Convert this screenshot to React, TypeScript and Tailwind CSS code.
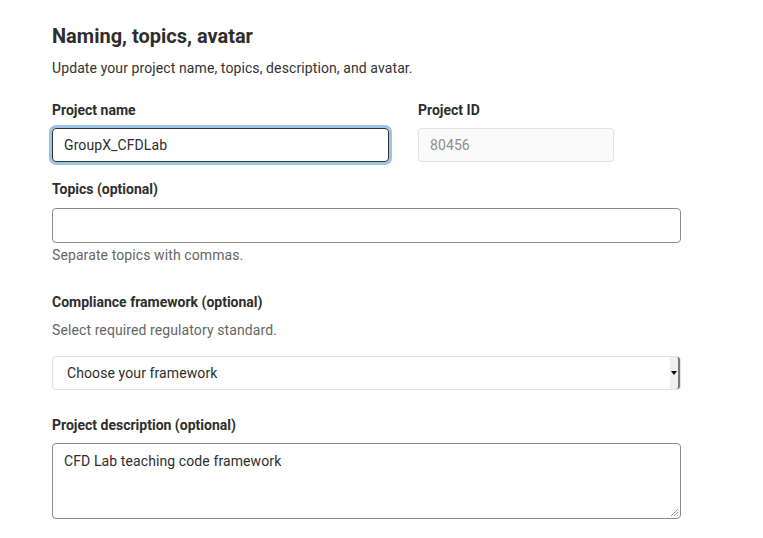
import React from 'react';

const font = { fontFamily: 'Roboto, "Liberation Sans", sans-serif' };

const Label: React.FC<{ children: React.ReactNode }> = ({ children }) => (
  <label className="block text-[14px] font-bold text-[#2e2e2e] leading-[20px]">{children}</label>
);

const App: React.FC = () => {
  return (
    <div className="w-[763px] h-[538px] bg-white overflow-hidden" style={font}>
      <div className="pl-[52px] pr-[82px] pt-[24px]">
        {/* Section header */}
        <h2 className="text-[20px] font-bold text-[#2e2e2e] leading-[24px]">Naming, topics, avatar</h2>
        <p className="mt-[10px] text-[14px] text-[#333] leading-[20px] tracking-[0.1px]">
          Update your project name, topics, description, and avatar.
        </p>

        {/* Name + ID */}
        <div className="mt-[22px] flex gap-[29px]">
          <div className="w-[337px]">
            <Label>Project name</Label>
            <div className="mt-[8px] h-[34px] rounded-[4px] border border-[#333] ring-[3px] ring-[#9fc3e7] flex items-center pl-[11px] text-[14px] text-[#2e2e2e] tracking-[0.1px]">
              GroupX_CFDLab
            </div>
          </div>
          <div className="w-[196px]">
            <Label>Project ID</Label>
            <div className="mt-[8px] h-[34px] rounded-[4px] border border-[#e3e3e3] bg-[#fafafa] flex items-center pl-[11px] text-[14px] text-[#8f8f8f] tracking-[0.1px]">
              80456
            </div>
          </div>
        </div>

        {/* Topics */}
        <div className="mt-[17px]">
          <Label>Topics (optional)</Label>
          <div className="mt-[9px] h-[35px] rounded-[4px] border border-[#8c8c8c]" />
          <p className="mt-[2px] text-[14px] text-[#666] leading-[20px] tracking-[0.1px]">Separate topics with commas.</p>
        </div>

        {/* Compliance */}
        <div className="mt-[27px]">
          <Label>Compliance framework (optional)</Label>
          <p className="mt-[8px] text-[14px] text-[#666] leading-[20px] tracking-[0.1px]">Select required regulatory standard.</p>
          <div className="mt-[16px] h-[34px] rounded-[4px] border border-[#e3e3e3] flex items-center justify-between pl-[14px] text-[14px] text-[#2e2e2e] tracking-[0.1px]">
            <span>Choose your framework</span>
            <div className="h-[32px] w-[10px] bg-[#efefef] border-r-[2px] border-[#777] rounded-r-[3px] flex items-center justify-center">
              <div className="w-0 h-0 border-l-[3px] border-r-[3px] border-t-[4px] border-l-transparent border-r-transparent border-t-black" />
            </div>
          </div>
        </div>

        {/* Description */}
        <div className="mt-[25px]">
          <Label>Project description (optional)</Label>
          <div className="relative mt-[8px] h-[76px] rounded-[4px] border border-[#8c8c8c] pl-[11px] pt-[7px] text-[14px] text-[#2e2e2e] leading-[20px] tracking-[0.1px]">
            CFD Lab teaching code framework
            <svg className="absolute right-[1px] bottom-[1px]" width="9" height="9" viewBox="0 0 9 9">
              <path d="M8 1 L1 8 M8 4 L4 8 M8 7 L7 8" stroke="#999" strokeWidth="1" />
            </svg>
          </div>
        </div>
      </div>
    </div>
  );
};

export default App;
